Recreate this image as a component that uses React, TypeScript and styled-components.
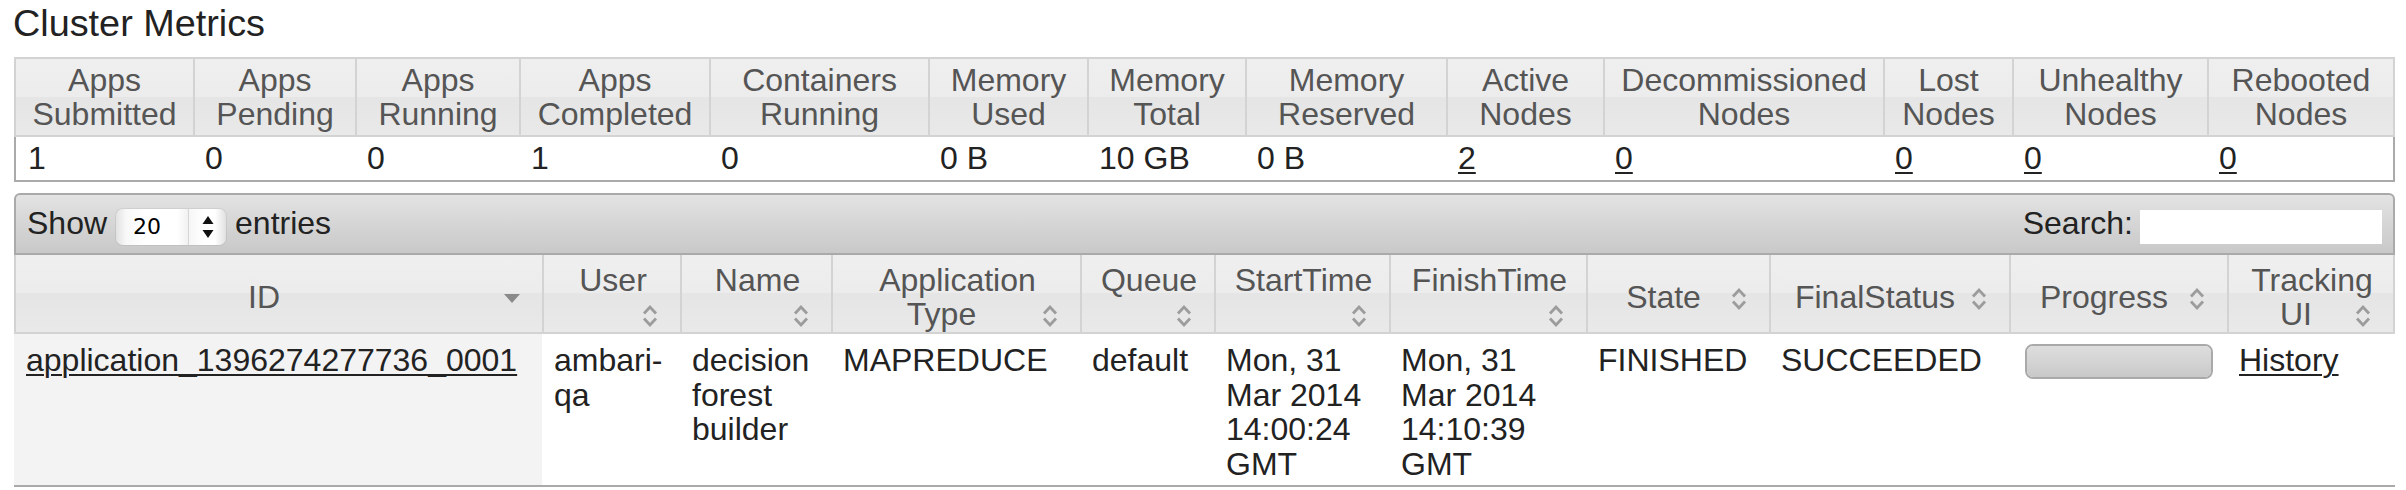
import React from 'react';
import styled, { createGlobalStyle, css } from 'styled-components';

const GlobalStyle = createGlobalStyle`
  html, body { margin: 0; padding: 0; background: #ffffff; }
  body {
    font-family: "Liberation Sans", Arial, Helvetica, sans-serif;
    font-size: 32px;
    line-height: 34.5px;
    color: #222222;
  }
`;

const headerGradient = css`
  background: linear-gradient(
    to bottom,
    #efefef 0%,
    #ececec 50%,
    #e5e5e5 50%,
    #e9e9e9 100%
  );
`;

const Page = styled.main`
  box-sizing: border-box;
  width: 2406px;
  padding: 2px 11px 0 14px;
`;

const Title = styled.h3`
  margin: 0 0 12px -1px;
  font-size: 37.8px;
  line-height: 43px;
  font-weight: normal;
  color: #222222;
`;

/* ---------- Cluster metrics ---------- */

const MetricsTable = styled.table`
  width: 100%;
  table-layout: fixed;
  border-collapse: separate;
  border-spacing: 0;
`;

const MetricHead = styled.th<{ $w: number }>`
  box-sizing: border-box;
  width: ${(p) => p.$w}px;
  padding: 3.5px 4px;
  border-top: 2px solid #d3d3d3;
  border-left: 2px solid #d3d3d3;
  border-bottom: 2px solid #d3d3d3;
  &:last-child {
    border-right: 2px solid #d3d3d3;
  }
  ${headerGradient};
  color: #555555;
  font-weight: normal;
  text-align: center;
  white-space: nowrap;
  vertical-align: middle;
`;

const MetricCell = styled.td`
  padding: 4px 12px;
  border-bottom: 2px solid #aaaaaa;
  background: #ffffff;
  white-space: nowrap;
  &:first-child {
    border-left: 2px solid #aaaaaa;
  }
  &:last-child {
    border-right: 2px solid #aaaaaa;
  }
`;

const Line = styled.span`
  display: block;
`;

const Link = styled.a`
  color: #222222;
  text-decoration: underline;
  text-decoration-thickness: 2px;
  text-underline-offset: 3px;
  cursor: pointer;
`;

/* ---------- Applications table ---------- */

const AppsSection = styled.section`
  margin-top: 11px;
`;

const Toolbar = styled.div`
  box-sizing: border-box;
  height: 62px;
  display: flex;
  align-items: center;
  justify-content: space-between;
  padding: 0 11px;
  border: 2px solid #aaaaaa;
  border-radius: 6px 6px 0 0;
  background: linear-gradient(to bottom, #e3e3e3 0%, #d4d4d4 55%, #c9c9c9 100%);
  color: #222222;
`;

const LengthControl = styled.label`
  display: flex;
  align-items: center;
  gap: 9px;
`;

const SelectBox = styled.div`
  box-sizing: border-box;
  display: flex;
  width: 110px;
  height: 36px;
  margin-top: 6px;
  border-radius: 7px;
  overflow: hidden;
  box-shadow: 0 0 0 1px rgba(0, 0, 0, 0.06);
  font-family: "DejaVu Sans", "Liberation Sans", sans-serif;
  font-size: 22px;
  line-height: 36px;
  color: #000000;
`;

const SelectValue = styled.span`
  flex: 1;
  padding-left: 17px;
  background: linear-gradient(to right, #e2e2e2 0px, #f8f8f8 10px, #ffffff 30px, #ffffff 85%, #f1f1f1 100%);
`;

const SelectArrows = styled.span`
  width: 37px;
  display: flex;
  align-items: center;
  justify-content: center;
  border-left: 1px solid #d6d6d6;
  background: linear-gradient(to right, #f6f6f6 0%, #ffffff 40%, #ffffff 70%, #e0e0e0 100%);
`;

const SearchControl = styled.label`
  display: flex;
  align-items: center;
  gap: 7px;
`;

const SearchInput = styled.input`
  box-sizing: border-box;
  width: 242px;
  height: 34px;
  margin-top: 6px;
  padding: 0 6px;
  border: none;
  outline: none;
  background: #ffffff;
  font-family: "Liberation Sans", Arial, sans-serif;
  font-size: 26px;
`;

const AppsTable = styled.table`
  width: 100%;
  table-layout: fixed;
  border-collapse: separate;
  border-spacing: 0;
`;

const AppHead = styled.th<{ $w: number }>`
  box-sizing: border-box;
  width: ${(p) => p.$w}px;
  padding: 8px 14px 0 16px;
  border-left: 2px solid #d3d3d3;
  border-bottom: 2px solid #d3d3d3;
  &:last-child {
    border-right: 2px solid #d3d3d3;
  }
  ${headerGradient};
  color: #555555;
  font-weight: normal;
  white-space: nowrap;
  vertical-align: middle;
  cursor: pointer;
`;

const HeadLine = styled.span`
  display: block;
  text-align: center;
`;

const HeadLastLine = styled.span`
  display: flex;
  align-items: center;
`;

const HeadText = styled.span`
  flex: 1;
  min-height: 34.5px;
  text-align: center;
`;

const SortIcon = styled.span`
  width: 32px;
  height: 32px;
  margin-top: 3px;
  display: flex;
  align-items: center;
  justify-content: center;
  flex: none;
`;

const AppCell = styled.td<{ $sorted?: boolean }>`
  padding: 9px 12px 4px;
  vertical-align: top;
  background: ${(p) => (p.$sorted ? '#f3f3f3' : '#ffffff')};
  border-bottom: 2px solid #aaaaaa;
  color: #222222;
  white-space: nowrap;
`;

const ProgressTrack = styled.div`
  box-sizing: border-box;
  height: 35px;
  margin: 1px 2px 0 4px;
  border: 2px solid #a9a9a9;
  border-radius: 8px;
  background: #ffffff;
  overflow: hidden;
`;

const ProgressValue = styled.div`
  height: 100%;
  background: linear-gradient(to bottom, #dddddd 0%, #d2d2d2 60%, #c8c8c8 100%);
`;

/* ---------- Icons ---------- */

const BothIcon = () => (
  <svg width="16" height="24" viewBox="0 0 16 24" aria-hidden="true">
    <path d="M2 9.5 L8 3 L14 9.5" fill="none" stroke="#9c9c9c" strokeWidth="2.8" />
    <path d="M2 14.5 L8 21 L14 14.5" fill="none" stroke="#9c9c9c" strokeWidth="2.8" />
  </svg>
);

const DescIcon = () => (
  <svg width="16" height="9" viewBox="0 0 16 9" aria-hidden="true">
    <path d="M0 0 H16 L8 9 Z" fill="#8a8a8a" />
  </svg>
);

const SelectArrowIcon = () => (
  <svg width="12" height="22" viewBox="0 0 12 22" aria-hidden="true">
    <path d="M6 0 L11.5 8 H0.5 Z" fill="#111111" />
    <path d="M0.5 14 H11.5 L6 22 Z" fill="#111111" />
  </svg>
);

/* ---------- Data ---------- */

type Metric = { label: string[]; value: string; w: number; link?: boolean };

const metrics: Metric[] = [
  { label: ['Apps', 'Submitted'], value: '1', w: 179 },
  { label: ['Apps', 'Pending'], value: '0', w: 162 },
  { label: ['Apps', 'Running'], value: '0', w: 164 },
  { label: ['Apps', 'Completed'], value: '1', w: 190 },
  { label: ['Containers', 'Running'], value: '0', w: 219 },
  { label: ['Memory', 'Used'], value: '0 B', w: 159 },
  { label: ['Memory', 'Total'], value: '10 GB', w: 158 },
  { label: ['Memory', 'Reserved'], value: '0 B', w: 201 },
  { label: ['Active', 'Nodes'], value: '2', w: 157, link: true },
  { label: ['Decommissioned', 'Nodes'], value: '0', w: 280, link: true },
  { label: ['Lost', 'Nodes'], value: '0', w: 129, link: true },
  { label: ['Unhealthy', 'Nodes'], value: '0', w: 195, link: true },
  { label: ['Rebooted', 'Nodes'], value: '0', w: 188, link: true },
];

type Column = { lines: string[]; w: number; sort: 'desc' | 'both' };

const columns: Column[] = [
  { lines: ['ID'], w: 528, sort: 'desc' },
  { lines: ['User', ''], w: 138, sort: 'both' },
  { lines: ['Name', ''], w: 151, sort: 'both' },
  { lines: ['Application', 'Type'], w: 249, sort: 'both' },
  { lines: ['Queue', ''], w: 134, sort: 'both' },
  { lines: ['StartTime', ''], w: 175, sort: 'both' },
  { lines: ['FinishTime', ''], w: 197, sort: 'both' },
  { lines: ['State'], w: 183, sort: 'both' },
  { lines: ['FinalStatus'], w: 240, sort: 'both' },
  { lines: ['Progress'], w: 218, sort: 'both' },
  { lines: ['Tracking', 'UI'], w: 168, sort: 'both' },
];

const app = {
  id: 'application_1396274277736_0001',
  user: ['ambari-', 'qa'],
  name: ['decision', 'forest', 'builder'],
  type: 'MAPREDUCE',
  queue: 'default',
  start: ['Mon, 31', 'Mar 2014', '14:00:24', 'GMT'],
  finish: ['Mon, 31', 'Mar 2014', '14:10:39', 'GMT'],
  state: 'FINISHED',
  finalStatus: 'SUCCEEDED',
  progress: 100,
  tracking: 'History',
};

const Lines = ({ lines }: { lines: string[] }) => (
  <>
    {lines.map((l, i) => (
      <Line key={i}>{l}</Line>
    ))}
  </>
);

const SortHeader = ({ col }: { col: Column }) => {
  const head = col.lines.slice(0, -1);
  const last = col.lines[col.lines.length - 1];
  return (
    <AppHead $w={col.w}>
      {head.map((l, i) => (
        <HeadLine key={i}>{l}</HeadLine>
      ))}
      <HeadLastLine>
        <HeadText>{last}</HeadText>
        <SortIcon>{col.sort === 'desc' ? <DescIcon /> : <BothIcon />}</SortIcon>
      </HeadLastLine>
    </AppHead>
  );
};

export default function App() {
  return (
    <>
      <GlobalStyle />
      <Page>
        <Title>Cluster Metrics</Title>
        <MetricsTable>
          <thead>
            <tr>
              {metrics.map((m) => (
                <MetricHead key={m.label.join(' ')} $w={m.w}>
                  <Lines lines={m.label} />
                </MetricHead>
              ))}
            </tr>
          </thead>
          <tbody>
            <tr>
              {metrics.map((m) => (
                <MetricCell key={m.label.join(' ')}>
                  {m.link ? <Link>{m.value}</Link> : m.value}
                </MetricCell>
              ))}
            </tr>
          </tbody>
        </MetricsTable>

        <AppsSection>
          <Toolbar>
            <LengthControl>
              Show
              <SelectBox>
                <SelectValue>20</SelectValue>
                <SelectArrows>
                  <SelectArrowIcon />
                </SelectArrows>
              </SelectBox>
              entries
            </LengthControl>
            <SearchControl>
              Search:
              <SearchInput type="text" />
            </SearchControl>
          </Toolbar>
          <AppsTable>
            <thead>
              <tr>
                {columns.map((c) => (
                  <SortHeader key={c.lines.join(' ')} col={c} />
                ))}
              </tr>
            </thead>
            <tbody>
              <tr>
                <AppCell $sorted>
                  <Link>{app.id}</Link>
                </AppCell>
                <AppCell>
                  <Lines lines={app.user} />
                </AppCell>
                <AppCell>
                  <Lines lines={app.name} />
                </AppCell>
                <AppCell>{app.type}</AppCell>
                <AppCell>{app.queue}</AppCell>
                <AppCell>
                  <Lines lines={app.start} />
                </AppCell>
                <AppCell>
                  <Lines lines={app.finish} />
                </AppCell>
                <AppCell>{app.state}</AppCell>
                <AppCell>{app.finalStatus}</AppCell>
                <AppCell>
                  <ProgressTrack>
                    <ProgressValue style={{ width: `${app.progress}%` }} />
                  </ProgressTrack>
                </AppCell>
                <AppCell>
                  <Link>{app.tracking}</Link>
                </AppCell>
              </tr>
            </tbody>
          </AppsTable>
        </AppsSection>
      </Page>
    </>
  );
}
